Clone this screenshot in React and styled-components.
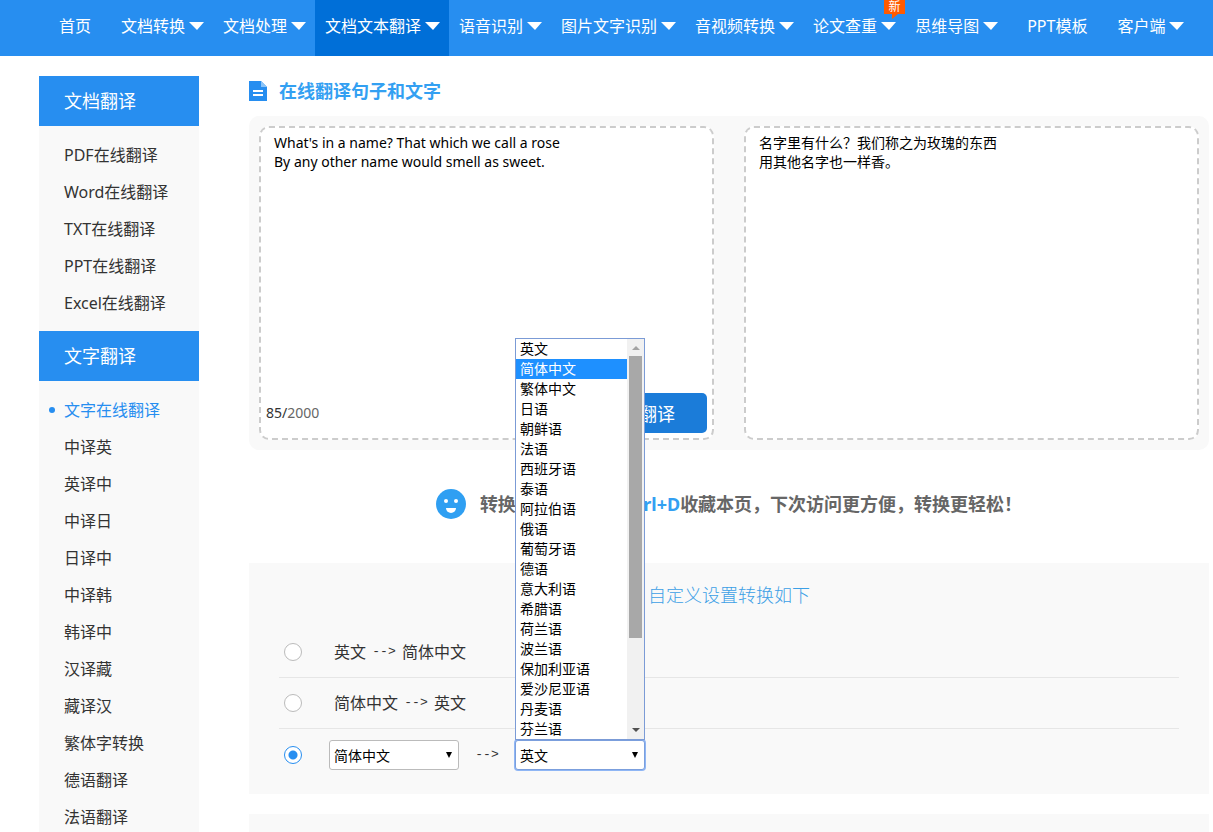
import React, { useState } from 'react';
import styled, { createGlobalStyle } from 'styled-components';

const GlobalStyle = createGlobalStyle`
    * {
        box-sizing: border-box;
    }

    html {
        scrollbar-width: none;
    }

    body {
        margin: 0;
        background-color: #fff;
        color: #333;
        font-family: "Noto Sans", "Noto Sans CJK SC", sans-serif;
        font-size: 16px;
        line-height: 22px;
    }

    ul, h1, h2, p {
        margin: 0;
        padding: 0;
        list-style: none;
        font-weight: normal;
    }

    a {
        color: inherit;
        text-decoration: none;
    }

    button, select, textarea {
        font-family: inherit;
    }
`;

const Nav = styled.nav`
    display: flex;
    height: 56px;
    padding-left: 39px;
    background-color: #278ef0;
    color: #fff;
`;

const NavLink = styled.a`
    position: relative;
    display: flex;
    align-items: center;
    gap: 4px;
    padding: ${({ $plain }) => ($plain ? '0 20px 4px' : '0 8px 4px 10px')};
    background-color: ${({ $active }) => ($active ? '#006fd8' : 'transparent')};
    white-space: nowrap;
`;

const Badge = styled.span`
    position: absolute;
    top: 0;
    right: 0;
    width: 21px;
    height: 14px;
    background-color: #ff5a00;
    font-size: 12px;
    line-height: 13px;
    text-align: center;

    svg {
        position: absolute;
        top: 14px;
        left: 8px;
    }
`;

const Page = styled.div`
    display: flex;
    gap: 50px;
    padding: 20px 4px 0 39px;
`;

const Sidebar = styled.aside`
    flex: 0 0 160px;
    background-color: #f9f9f9;
`;

const SideTitle = styled.h2`
    padding-left: 25px;
    background-color: #278ef0;
    color: #fff;
    font-size: 18px;
    line-height: 50px;
`;

const SideList = styled.ul`
    padding: 10px 0;
`;

const SideLink = styled.a`
    display: flex;
    align-items: center;
    height: 37px;
    padding-left: ${({ $active }) => ($active ? '10px' : '25px')};
    color: ${({ $active }) => ($active ? '#278ef0' : '#333')};

    &::before {
        content: '';
        display: ${({ $active }) => ($active ? 'block' : 'none')};
        width: 6px;
        height: 6px;
        margin-right: 9px;
        border-radius: 50%;
        background-color: #278ef0;
    }
`;

const Main = styled.main`
    flex: 1;
    min-width: 0;
`;

const Title = styled.h1`
    display: flex;
    align-items: center;
    gap: 12px;
    height: 30px;
    margin-bottom: 10px;
    color: #33a0f2;
    font-size: 18px;
    font-weight: bold;
`;

const Translator = styled.section`
    display: flex;
    gap: 30px;
    padding: 10px;
    border-radius: 10px;
    background-color: #f9f9f9;
`;

const TextBox = styled.div`
    flex: 1;
    display: flex;
    flex-direction: column;
    height: 314px;
    border: 2px dashed #ccc;
    border-radius: 10px;
    background-color: #fff;
`;

const TextArea = styled.textarea`
    flex: 1;
    width: 100%;
    padding: 5px 13px;
    border: none;
    outline: none;
    resize: none;
    background: transparent;
    color: #000;
    font-size: 14px;
    line-height: 19px;
`;

const BoxFooter = styled.div`
    display: flex;
    align-items: center;
    justify-content: space-between;
    padding: 0 5px 5px;
    color: #666;
    font-size: 14px;

    b {
        color: #333;
        font-weight: normal;
    }
`;

const TranslateButton = styled.button`
    width: 100px;
    height: 40px;
    border: none;
    border-radius: 5px;
    background-color: #1b7cd9;
    color: #fff;
    font-size: 18px;
`;

const Tip = styled.p`
    display: flex;
    align-items: center;
    justify-content: center;
    gap: 14px;
    height: 113px;
    padding-bottom: 5px;
    color: #666;
    font-size: 18px;
    font-weight: bold;

    em {
        color: #33a0f2;
        font-style: normal;
    }
`;

const Settings = styled.section`
    padding: 0 30px 13px;
    background-color: #f9f9f9;
`;

const SettingsTitle = styled.h2`
    color: #3ca0e6;
    font-size: 18px;
    font-weight: 300;
    line-height: 64px;
    text-align: center;
`;

const OptionRow = styled.div`
    display: flex;
    align-items: center;
    height: ${({ $last }) => ($last ? '52px' : '51px')};
    padding-left: 5px;
    border-bottom: ${({ $last }) => ($last ? 'none' : '1px solid #e6e6e6')};
`;

const Radio = styled.input`
    appearance: none;
    width: 18px;
    height: 18px;
    margin: 0;
    border: 1px solid #bbb;
    border-radius: 50%;
    background-color: #fff;

    &:checked {
        border-color: #278ef0;
        background-image: radial-gradient(circle, #278ef0 4px, transparent 5px);
    }
`;

const OptionLabel = styled.label`
    display: flex;
    gap: 6px;
    padding-left: 32px;
`;

const Pickers = styled.div`
    display: flex;
    align-items: center;
    gap: 16px;
    padding-left: 27px;
`;

const Arrow = styled.span`
    width: 24px;
    font-family: "Liberation Mono", monospace;
    font-size: 13px;
    text-align: center;
    white-space: nowrap;
`;

const Picker = styled.div`
    position: relative;
    width: 130px;
`;

const Select = styled.select`
    appearance: none;
    display: block;
    width: 100%;
    height: 30px;
    padding: 0 4px;
    border: 1px solid ${({ $open }) => ($open ? '#7b9fdd' : '#bbb')};
    border-radius: 3px;
    outline: none;
    box-shadow: ${({ $open }) => ($open ? '0 0 0 1px #8fb6f5' : 'none')};
    background-color: #fff;
    color: #000;
    font-size: 14px;
`;

const SelectArrow = styled.svg`
    position: absolute;
    top: 12px;
    right: 7px;
    pointer-events: none;
`;

const Dropdown = styled.div`
    position: absolute;
    bottom: 30px;
    left: 0;
    z-index: 1;
    display: flex;
    width: 100%;
    border: 1px solid #7b9bd6;
    background-color: #fff;
`;

const DropdownList = styled.ul`
    flex: 1;
`;

const DropdownItem = styled.li`
    height: 20px;
    padding-left: 4px;
    background-color: ${({ $active }) => ($active ? '#1e90ff' : '#fff')};
    color: ${({ $active }) => ($active ? '#fff' : '#000')};
    font-size: 14px;
    line-height: 20px;
    cursor: default;
`;

const Scrollbar = styled.div`
    display: flex;
    flex-direction: column;
    align-items: center;
    justify-content: space-between;
    width: 17px;
    padding: 7px 0;
    background-color: #f1f1f1;
`;

const ScrollThumb = styled.div`
    width: 13px;
    height: 282px;
    margin: 6px 0 auto;
    background-color: #a8a8a8;
`;

const NextPanel = styled.section`
    height: 40px;
    margin-top: 20px;
    background-color: #f9f9f9;
`;

const navItems = [
    { text: '首页', plain: true },
    { text: '文档转换' },
    { text: '文档处理' },
    { text: '文档文本翻译', active: true },
    { text: '语音识别' },
    { text: '图片文字识别' },
    { text: '音视频转换' },
    { text: '论文查重', badge: '新' },
    { text: '思维导图' },
    { text: 'PPT模板', plain: true },
    { text: '客户端' },
];

const sideGroups = [
    {
        title: '文档翻译',
        items: ['PDF在线翻译', 'Word在线翻译', 'TXT在线翻译', 'PPT在线翻译', 'Excel在线翻译'],
    },
    {
        title: '文字翻译',
        items: [
            '文字在线翻译', '中译英', '英译中', '中译日', '日译中', '中译韩', '韩译中',
            '汉译藏', '藏译汉', '繁体字转换', '德语翻译', '法语翻译',
        ],
    },
];

const languages = [
    '英文', '简体中文', '繁体中文', '日语', '朝鲜语', '法语', '西班牙语', '泰语', '阿拉伯语', '俄语',
    '葡萄牙语', '德语', '意大利语', '希腊语', '荷兰语', '波兰语', '保加利亚语', '爱沙尼亚语', '丹麦语', '芬兰语',
];

function LanguageSelect({ label, value, onChange, open, children }) {
    return (
        <Picker>
            <Select aria-label={label} value={value} $open={open} onChange={(e) => onChange(e.target.value)}>
                {languages.map((name) => <option key={name}>{name}</option>)}
            </Select>
            <SelectArrow width="6" height="6" viewBox="0 0 6 6">
                <path d="M0 0h6L3 6z" fill="#000" />
            </SelectArrow>
            {children}
        </Picker>
    );
}

function App() {
    const [source, setSource] = useState("What's in a name? That which we call a rose\nBy any other name would smell as sweet.");
    const [mode, setMode] = useState('custom');
    const [from, setFrom] = useState('简体中文');
    const [to, setTo] = useState('英文');
    const [hovered, setHovered] = useState('简体中文');
    const [open, setOpen] = useState(true); // 语言下拉列表

    const handlePick = (name) => {
        setTo(name);
        setOpen(false);
    };

    return (
        <>
            <GlobalStyle />
            <Nav>
                {navItems.map(({ text, plain, active, badge }) => (
                    <NavLink key={text} href="#" $plain={plain} $active={active}>
                        {text}
                        {!plain && (
                            <svg width="16" height="8" viewBox="0 0 16 8">
                                <path d="M0 0h15L8 8z" fill="#fff" />
                            </svg>
                        )}
                        {badge && (
                            <Badge>
                                {badge}
                                <svg width="8" height="5" viewBox="0 0 8 5">
                                    <path d="M0 0h6L0 5z" fill="#ff5a00" />
                                </svg>
                            </Badge>
                        )}
                    </NavLink>
                ))}
            </Nav>
            <Page>
                <Sidebar>
                    {sideGroups.map((group) => (
                        <React.Fragment key={group.title}>
                            <SideTitle>{group.title}</SideTitle>
                            <SideList>
                                {group.items.map((item) => (
                                    <li key={item}>
                                        <SideLink href="#" $active={item === '文字在线翻译'}>{item}</SideLink>
                                    </li>
                                ))}
                            </SideList>
                        </React.Fragment>
                    ))}
                </Sidebar>
                <Main>
                    <Title>
                        <svg width="18" height="20" viewBox="0 0 18 20">
                            <path d="M0 0h12l6 6v14H0z" fill="#278ef0" />
                            <path d="M12 0l6 6h-6z" fill="#8cc4f8" />
                            <path d="M4 9h10v2H4zM4 13h10v2H4z" fill="#fff" />
                        </svg>
                        在线翻译句子和文字
                    </Title>
                    <Translator>
                        <TextBox>
                            <TextArea aria-label="原文" spellCheck={false} value={source} onChange={(e) => setSource(e.target.value)} />
                            <BoxFooter>
                                <span><b>85/</b>2000</span>
                                <TranslateButton type="button">翻译</TranslateButton>
                            </BoxFooter>
                        </TextBox>
                        <TextBox>
                            <TextArea aria-label="译文" readOnly value={'名字里有什么？我们称之为玫瑰的东西\n用其他名字也一样香。'} />
                        </TextBox>
                    </Translator>
                    <Tip>
                        <svg width="30" height="30" viewBox="0 0 30 30">
                            <circle cx="15" cy="15" r="15" fill="#2f9ff2" />
                            <circle cx="10" cy="12" r="2" fill="#fff" />
                            <circle cx="20" cy="12" r="2" fill="#fff" />
                            <path d="M10 19h10a5 5 0 0 1-10 0z" fill="#fff" />
                        </svg>
                        <span>转换超级好用？按<em>Ctrl+D</em>收藏本页，下次访问更方便，转换更轻松！</span>
                    </Tip>
                    <Settings>
                        <SettingsTitle>自定义设置转换如下</SettingsTitle>
                        <OptionRow>
                            <Radio type="radio" id="en-zh" name="mode" checked={mode === 'en-zh'} onChange={() => setMode('en-zh')} />
                            <OptionLabel htmlFor="en-zh">英文<Arrow>--&gt;</Arrow>简体中文</OptionLabel>
                        </OptionRow>
                        <OptionRow>
                            <Radio type="radio" id="zh-en" name="mode" checked={mode === 'zh-en'} onChange={() => setMode('zh-en')} />
                            <OptionLabel htmlFor="zh-en">简体中文<Arrow>--&gt;</Arrow>英文</OptionLabel>
                        </OptionRow>
                        <OptionRow $last>
                            <Radio type="radio" aria-label="自定义" name="mode" checked={mode === 'custom'} onChange={() => setMode('custom')} />
                            <Pickers>
                                <LanguageSelect label="源语言" value={from} onChange={setFrom} />
                                <Arrow>--&gt;</Arrow>
                                <LanguageSelect label="目标语言" value={to} onChange={setTo} open={open}>
                                    {open && (
                                        <Dropdown>
                                            <DropdownList role="listbox">
                                                {languages.map((name) => (
                                                    <DropdownItem
                                                        key={name}
                                                        role="option"
                                                        aria-selected={name === to}
                                                        $active={name === hovered}
                                                        onMouseEnter={() => setHovered(name)}
                                                        onClick={() => handlePick(name)}
                                                    >
                                                        {name}
                                                    </DropdownItem>
                                                ))}
                                            </DropdownList>
                                            <Scrollbar>
                                                <svg width="8" height="4" viewBox="0 0 8 4">
                                                    <path d="M4 0l4 4H0z" fill="#a3a3a3" />
                                                </svg>
                                                <ScrollThumb />
                                                <svg width="8" height="4" viewBox="0 0 8 4">
                                                    <path d="M0 0h8L4 4z" fill="#505050" />
                                                </svg>
                                            </Scrollbar>
                                        </Dropdown>
                                    )}
                                </LanguageSelect>
                            </Pickers>
                        </OptionRow>
                    </Settings>
                    <NextPanel />
                </Main>
            </Page>
        </>
    );
}

export default App;
